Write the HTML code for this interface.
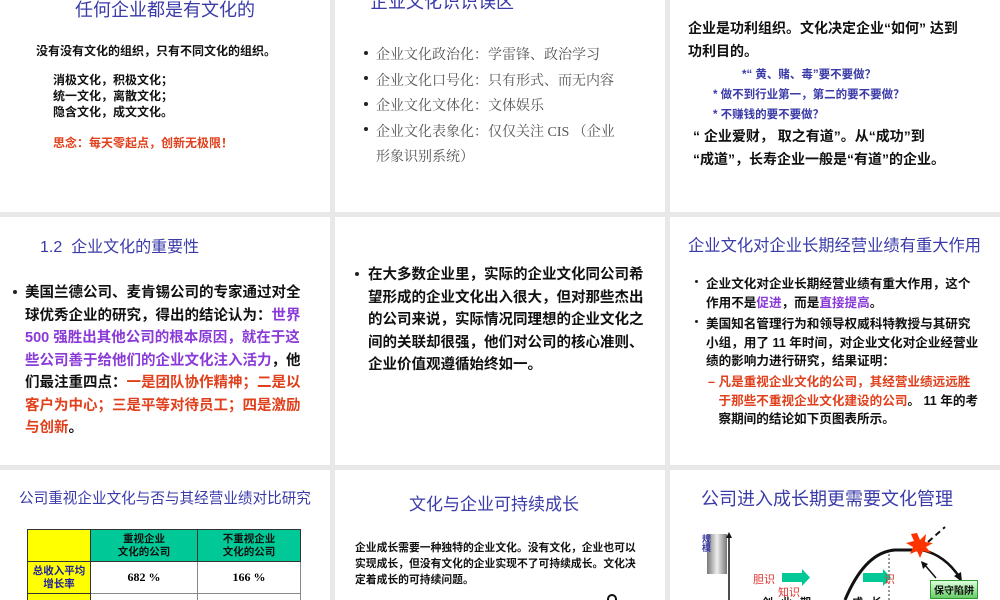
<!DOCTYPE html>
<html><head><meta charset="utf-8"><style>
*{margin:0;padding:0;box-sizing:border-box}
body{width:1000px;height:600px;background:#e8e8e8;position:relative;overflow:hidden;font-family:"Liberation Sans","Noto Sans CJK SC",sans-serif}
.s{position:absolute;background:#fff;overflow:hidden}
.a{position:absolute;white-space:nowrap}
.t{color:#3a3aa8}
.b{font-weight:bold;color:#111;white-space:nowrap}
.r{color:#e0401c}
.p{color:#8a3ad8}
.bu{position:absolute;width:4px;height:4px;background:#222;border-radius:50%}
</style></head><body>
<!-- row 1 -->
<div class="s" style="left:0;top:0;width:330px;height:212px">
 <div class="a t" style="left:75px;top:-4px;font-size:18px">任何企业都是有文化的</div>
 <div class="a b" style="left:36px;top:42px;font-size:12px">没有没有文化的组织，只有不同文化的组织。</div>
 <div class="a b" style="left:53px;top:72px;font-size:12px;line-height:16px">消极文化，积极文化；<br>统一文化，离散文化；<br>隐含文化，成文文化。</div>
 <div class="a r" style="left:53px;top:134px;font-size:12px;font-weight:bold">思念：每天零起点，创新无极限！</div>
</div>
<div class="s" style="left:335px;top:0;width:330px;height:212px">
 <div class="a t" style="left:35px;top:-12px;font-size:18px">企业文化识识误区</div>
 <div style="position:absolute;left:41px;top:43px;font-size:14px;color:#555;line-height:25.5px;white-space:nowrap;font-family:'Liberation Serif','Noto Serif CJK SC',serif">企业文化政治化：学雷锋、政治学习<br>企业文化口号化：只有形式、而无内容<br>企业文化文体化：文体娱乐<br>企业文化表象化：仅仅关注 CIS （企业<br>形象识别系统）</div>
 <div class="bu" style="left:29px;top:51px"></div><div class="bu" style="left:29px;top:76px"></div><div class="bu" style="left:29px;top:102px"></div><div class="bu" style="left:29px;top:127px"></div>
</div>
<div class="s" style="left:670px;top:0;width:330px;height:212px">
 <div class="a b" style="left:18px;top:17px;font-size:14px;line-height:23px">企业是功利组织。文化决定企业“如何” 达到<br>功利目的。</div>
 <div class="a t" style="left:72px;top:66px;font-size:11.5px;font-weight:bold">*“ 黄、赌、毒”要不要做？</div>
 <div class="a t" style="left:43px;top:86px;font-size:11.5px;font-weight:bold">* 做不到行业第一，第二的要不要做？</div>
 <div class="a t" style="left:43px;top:106px;font-size:11.5px;font-weight:bold">* 不赚钱的要不要做？</div>
 <div class="a b" style="left:23px;top:125px;font-size:14px;line-height:23px">“ 企业爱财， 取之有道”。从“成功”到<br>“成道”，长寿企业一般是“有道”的企业。</div>
</div>
<!-- row 2 -->
<div class="s" style="left:0;top:217px;width:330px;height:248px">
 <div class="a t" style="left:40px;top:16px;font-size:16px">1.2&nbsp; 企业文化的重要性</div>
 <div class="bu" style="left:13px;top:73px"></div>
 <div class="b" style="position:absolute;left:25px;top:65px;font-size:14.5px;line-height:22.5px">美国兰德公司、麦肯锡公司的专家通过对全<br>球优秀企业的研究，得出的结论认为：<span class="p">世界</span><br><span class="p">500 强胜出其他公司的根本原因，就在于这</span><br><span class="p">些公司善于给他们的企业文化注入活力</span>，他<br>们最注重四点：<span class="r">一是团队协作精神；二是以</span><br><span class="r">客户为中心；三是平等对待员工；四是激励</span><br><span class="r">与创新</span>。</div>
</div>
<div class="s" style="left:335px;top:217px;width:330px;height:248px">
 <div class="bu" style="left:20px;top:55px"></div>
 <div class="b" style="position:absolute;left:33px;top:47px;font-size:14.5px;line-height:22.5px">在大多数企业里，实际的企业文化同公司希<br>望形成的企业文化出入很大，但对那些杰出<br>的公司来说，实际情况同理想的企业文化之<br>间的关联却很强，他们对公司的核心准则、<br>企业价值观遵循始终如一。</div>
</div>
<div class="s" style="left:670px;top:217px;width:330px;height:248px">
 <div class="a t" style="left:18px;top:15px;font-size:16.3px">企业文化对企业长期经营业绩有重大作用</div>
 <div class="bu" style="left:25px;top:63px;width:3px;height:3px"></div>
 <div class="bu" style="left:25px;top:103px;width:3px;height:3px"></div>
 <div class="b" style="position:absolute;left:36px;top:58px;font-size:12.6px;line-height:18.5px">企业文化对企业长期经营业绩有重大作用，这个<br>作用不是<span class="p">促进</span>，而是<span class="p">直接提高</span>。</div>
 <div class="b" style="position:absolute;left:36px;top:98px;font-size:12.6px;line-height:18.5px">美国知名管理行为和领导权威科特教授与其研究<br>小组，用了 11 年时间，对企业文化对企业经营业<br>绩的影响力进行研究，结果证明：</div>
 <div class="b" style="position:absolute;left:38px;top:156px;font-size:12.6px;line-height:18.5px"><span class="r">– 凡是重视企业文化的公司，其经营业绩远远胜</span><br>&nbsp;&nbsp;&nbsp;<span class="r">于那些不重视企业文化建设的公司</span>。 11 年的考<br>&nbsp;&nbsp;&nbsp;察期间的结论如下页图表所示。</div>
</div>
<!-- row 3 -->
<div class="s" style="left:0;top:470px;width:330px;height:130px">
 <div class="a t" style="left:19px;top:17px;font-size:14.6px">公司重视企业文化与否与其经营业绩对比研究</div>
 <table style="position:absolute;left:27px;top:59px;border-collapse:collapse;font-size:10.5px;font-weight:bold;text-align:center;line-height:13px">
  <tr style="height:32px"><td style="width:63px;background:#ffff00;border:1px solid #333"></td><td style="width:107px;background:#00c896;border:1px solid #333;color:#111">重视企业<br>文化的公司</td><td style="width:103px;background:#00c896;border:1px solid #333;color:#111">不重视企业<br>文化的公司</td></tr>
  <tr style="height:32px"><td style="background:#ffff00;border:1px solid #333;color:#2020a0">总收入平均<br>增长率</td><td style="border:1px solid #888;font-size:12px;font-family:'Liberation Serif',serif">682 %</td><td style="border:1px solid #888;font-size:12px;font-family:'Liberation Serif',serif">166 %</td></tr>
  <tr style="height:20px"><td style="background:#ffff00;border:1px solid #333"></td><td style="border:1px solid #888"></td><td style="border:1px solid #888"></td></tr>
 </table>
</div>
<div class="s" style="left:335px;top:470px;width:330px;height:130px">
 <div class="a t" style="left:74px;top:20px;font-size:17px">文化与企业可持续成长</div>
 <div class="b" style="position:absolute;left:20px;top:70px;font-size:10.8px;line-height:16px">企业成长需要一种独特的企业文化。没有文化，企业也可以<br>实现成长，但没有文化的企业实现不了可持续成长。文化决<br>定着成长的可持续问题。</div>
 <div style="position:absolute;left:272px;top:124px;width:10px;height:10px;border:2px solid #111;border-radius:50% 50% 0 0"></div>
</div>
<div class="s" style="left:670px;top:470px;width:330px;height:130px">
 <div class="a t" style="left:31px;top:15px;font-size:18px">公司进入成长期更需要文化管理</div>
 <div style="position:absolute;left:37px;top:64px;width:20px;height:40px;background:linear-gradient(90deg,#777,#eee,#777)"></div>
 <div class="a t" style="left:31px;top:64px;font-size:9px;font-weight:bold;line-height:10px;writing-mode:vertical-rl">规模</div>
 <svg style="position:absolute;left:0;top:0" width="330" height="130">
  <line x1="59" y1="130" x2="59" y2="66" stroke="#111" stroke-width="1.5"/><polygon points="56,68 59,62 62,68" fill="#111"/>
  <path d="M175 130 Q195 82 225 80 L250 80" stroke="#111" stroke-width="3" fill="none"/>
  <line x1="219" y1="84" x2="219" y2="130" stroke="#333" stroke-dasharray="2,2"/>
  <path d="M252 80 Q275 85 290 108" stroke="#111" stroke-width="2.5" fill="none"/><polygon points="284,106 292,112 291,102" fill="#111"/>
  <line x1="258" y1="72" x2="275" y2="57" stroke="#111" stroke-width="2" stroke-dasharray="6,4"/>
  <line x1="266" y1="108" x2="254" y2="94" stroke="#111" stroke-width="1.5"/><polygon points="251,91 258,94 253,99" fill="#111"/>
  <polygon points="247,63 250,70 256,64 255,72 263,73 256,77 261,83 253,81 250,88 247,81 240,84 243,77 236,73 244,71 241,64" fill="#ff3300"/>
  <rect x="112" y="103" width="20" height="9" fill="#00c896"/><polygon points="132,99 140,107.5 132,116" fill="#00c896"/>
  <rect x="193" y="103" width="20" height="9" fill="#00c896"/><polygon points="213,99 221,107.5 213,116" fill="#00c896"/>
 </svg>
 <div class="a" style="left:83px;top:101px;font-size:11px;color:#e03030">胆识</div>
 <div class="a" style="left:108px;top:114px;font-size:11px;color:#e03030">知识</div>
 <div class="a" style="left:214px;top:101px;font-size:11px;color:#e03030">识</div>
 <div class="a b" style="left:92px;top:124px;font-size:11px;letter-spacing:8px">创业期</div>
 <div class="a b" style="left:182px;top:124px;font-size:11px;letter-spacing:8px">成长</div>
 <div class="a b" style="left:260px;top:110px;font-size:10px;background:linear-gradient(#dfd,#6c6);padding:1px 3px;border:1px solid #393">保守陷阱</div>
</div>
</body></html>
